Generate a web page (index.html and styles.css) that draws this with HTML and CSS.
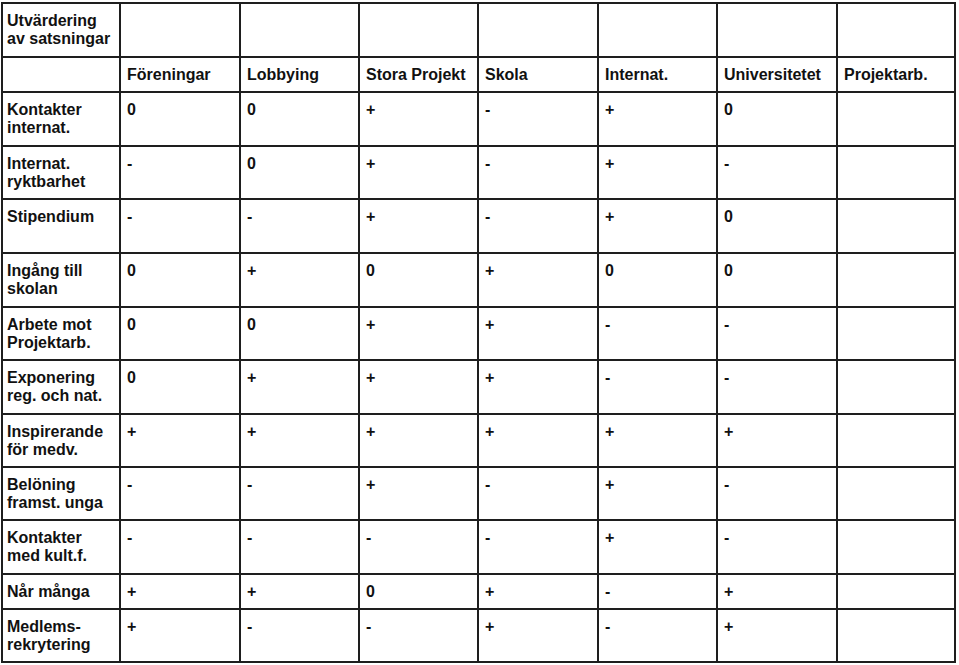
FILE: index.html
```html
<!DOCTYPE html>
<html lang="sv">
<head>
<meta charset="utf-8">
<title>Utvärdering av satsningar</title>
<link rel="stylesheet" href="styles.css">
</head>
<body>
<table class="eval">
  <colgroup>
    <col class="c-first"><col class="c-a"><col class="c-b"><col class="c-b"><col class="c-a"><col class="c-b"><col class="c-a"><col class="c-last">
  </colgroup>
  <tr class="r-tall">
    <td class="label">Utvärdering<br>av satsningar</td><td></td><td></td><td></td><td></td><td></td><td></td><td></td>
  </tr>
  <tr class="r-short">
    <td class="label"></td><td>Föreningar</td><td>Lobbying</td><td>Stora Projekt</td><td>Skola</td><td>Internat.</td><td>Universitetet</td><td>Projektarb.</td>
  </tr>
  <tr class="r-54">
    <td class="label">Kontakter<br>internat.</td><td>0</td><td>0</td><td>+</td><td>-</td><td>+</td><td>0</td><td></td>
  </tr>
  <tr class="r-53">
    <td class="label">Internat.<br>ryktbarhet</td><td>-</td><td>0</td><td>+</td><td>-</td><td>+</td><td>-</td><td></td>
  </tr>
  <tr class="r-54">
    <td class="label">Stipendium</td><td>-</td><td>-</td><td>+</td><td>-</td><td>+</td><td>0</td><td></td>
  </tr>
  <tr class="r-54">
    <td class="label">Ingång till<br>skolan</td><td>0</td><td>+</td><td>0</td><td>+</td><td>0</td><td>0</td><td></td>
  </tr>
  <tr class="r-53">
    <td class="label">Arbete mot<br>Projektarb.</td><td>0</td><td>0</td><td>+</td><td>+</td><td>-</td><td>-</td><td></td>
  </tr>
  <tr class="r-54">
    <td class="label">Exponering<br>reg. och nat.</td><td>0</td><td>+</td><td>+</td><td>+</td><td>-</td><td>-</td><td></td>
  </tr>
  <tr class="r-53">
    <td class="label">Inspirerande<br>för medv.</td><td>+</td><td>+</td><td>+</td><td>+</td><td>+</td><td>+</td><td></td>
  </tr>
  <tr class="r-53">
    <td class="label">Belöning<br>framst. unga</td><td>-</td><td>-</td><td>+</td><td>-</td><td>+</td><td>-</td><td></td>
  </tr>
  <tr class="r-54">
    <td class="label">Kontakter<br>med kult.f.</td><td>-</td><td>-</td><td>-</td><td>-</td><td>+</td><td>-</td><td></td>
  </tr>
  <tr class="r-short">
    <td class="label">Når många</td><td>+</td><td>+</td><td>0</td><td>+</td><td>-</td><td>+</td><td></td>
  </tr>
  <tr class="r-53">
    <td class="label">Medlems-<br>rekrytering</td><td>+</td><td>-</td><td>-</td><td>+</td><td>-</td><td>+</td><td></td>
  </tr>
</table>
</body>
</html>
```

FILE: styles.css
```css
html, body {
  margin: 0;
  padding: 0;
  background: #ffffff;
}

body {
  padding: 2px 0 0 1px;
  font-family: "Liberation Sans", Arial, sans-serif;
  font-size: 16px;
  font-weight: bold;
  color: #111111;
}

.eval {
  border-collapse: collapse;
  table-layout: fixed;
  width: 955px;
}

.eval td {
  border: 2px solid #1e1e1e;
  padding: 8px 5px 0 6px;
  vertical-align: top;
  line-height: 18.4px;
  white-space: nowrap;
  overflow: hidden;
}

.eval td.label {
  padding-left: 4px;
}

.c-first { width: 118px; }
.c-a { width: 120px; }
.c-b { width: 119px; }
.c-last { width: 118px; }

.r-tall { height: 54px; }
.r-short { height: 35px; }
.r-53 { height: 53px; }
.r-54 { height: 54px; }
```
